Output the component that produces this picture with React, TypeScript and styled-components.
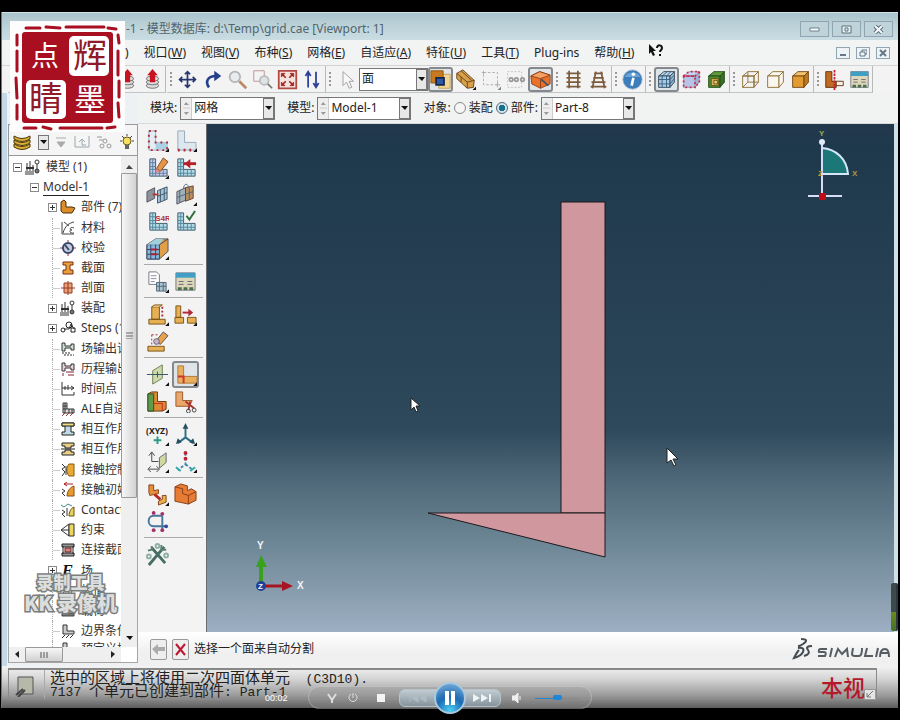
import React from "react";
import styled, { createGlobalStyle, css } from "styled-components";

const GlobalStyle = createGlobalStyle`
  * { box-sizing: border-box; }
  body { margin: 0; background: #000; }
  button, select, input { font: inherit; color: inherit; margin: 0; padding: 0; }
  ul { list-style: none; margin: 0; padding: 0; }
`;

const Screen = styled.div`
  position: relative;
  display: flex;
  flex-direction: column;
  height: 100vh;
  min-height: 600px;
  padding: 12px 2px 12px 1px;
  background: #000;
  color: #222;
  font: 12px/16px "Noto Sans", "Noto Sans CJK SC", sans-serif;
  overflow: hidden;
`;

const AppWindow = styled.div`
  flex: 1;
  min-height: 0;
  display: flex;
  flex-direction: column;
  background: #f1f2f2;
  border-left: 1px solid #5f7f90;
`;

const TitleBar = styled.header`
  display: flex;
  align-items: center;
  justify-content: space-between;
  height: 28px;
  padding: 5px 5px 0 124px;
  background: linear-gradient(#a9c2cb, #bdd3da 50%, #c9dde3);
  color: #52646c;
  border-top: 1px solid #d3e3e8;
`;

const Title = styled.h1`
  margin: 0;
  font-size: 12px;
  font-weight: 400;
  white-space: pre;
`;

const Row = styled.div<{ $gap?: number }>`
  display: flex;
  align-items: center;
  gap: ${(p) => p.$gap ?? 0}px;
`;

const CaptionButton = styled.button<{ $small?: boolean }>`
  display: grid;
  place-items: center;
  width: ${(p) => (p.$small ? 14 : 29)}px;
  height: ${(p) => (p.$small ? 12 : 16)}px;
  border: 1px solid #8fa6b2;
  background: ${(p) => (p.$small ? "#edf3f6" : "#bfd3db")};
`;

const MenuBar = styled.nav`
  display: flex;
  align-items: center;
  justify-content: space-between;
  height: 25px;
  padding: 0 8px 0 123px;
  background: #f2f3f3;
`;

const MenuItem = styled.button`
  border: 0;
  background: none;
  line-height: 16px;
  white-space: nowrap;
`;

const ToolBar = styled.div`
  display: flex;
  height: 28px;
  padding-left: 6px;
  border-top: 1px solid #d2d3d4;
  background: #f3f3f3;
  flex-shrink: 0;
`;

const ToolGroup = styled.div<{ $first?: boolean; $open?: boolean }>`
  display: flex;
  align-items: center;
  justify-content: flex-end;
  width: ${(p) => (p.$first ? "158px" : "auto")};
  margin-right: ${(p) => (p.$first ? 1 : 0)}px;
  border-right: ${(p) => (p.$open ? 0 : 1)}px solid #b9babb;
  border-bottom: 1px solid #c4c5c6;
`;

const Grip = styled.span`
  width: 8px;
  height: 16px;
  background: radial-gradient(circle at 4px 2px, #999 1px, transparent 1px) 0 0 / 8px 4px;
`;

const IconButton = styled.button<{ $on?: boolean; $size?: number }>`
  display: grid;
  place-items: center;
  width: ${(p) => p.$size ?? 25}px;
  height: ${(p) => p.$size ?? 25}px;
  border: ${(p) => (p.$on ? "2px solid #85898d" : "0")};
  border-radius: 3px;
  background: ${(p) => (p.$on ? "#dfe4e8" : "none")};
  svg { display: block; flex: none; margin: -4px; }
`;

const ComboBox = styled.div<{ $width: number }>`
  display: flex;
  align-items: stretch;
  width: ${(p) => p.$width}px;
  height: 23px;
  border: 1px solid #777;
  background: #fff;
`;

const Spinner = styled.span`
  display: grid;
  width: 11px;
  place-items: center;
  background: #eee;
  border-right: 1px solid #ccc;
`;

const Select = styled.select`
  flex: 1;
  min-width: 0;
  appearance: none;
  border: 0;
  background: none;
  padding-left: 2px;
`;

const DropMark = styled.span`
  display: grid;
  place-items: center;
  width: 11px;
  min-height: 15px;
  border: 1px solid #777;
  background: #e8e8e8;
`;

const Body = styled.main`
  flex: 1;
  min-height: 0;
  display: flex;
`;

const SidePanel = styled.aside`
  display: flex;
  flex-direction: column;
  width: 136px;
  flex: none;
  padding: 31px 0 3px 6px;
  background: linear-gradient(90deg, #c4d9e7 0 5px, #eef1f3 5px);
`;

const SideHead = styled.div`
  display: flex;
  align-items: center;
  justify-content: space-between;
  height: 32px;
  padding: 4px 2px 0 4px;
  border: 1px solid #999;
  background: #f5f5f5;
`;

const TreeFrame = styled.div`
  flex: 1;
  min-height: 0;
  display: grid;
  grid-template: minmax(0, 1fr) 15px / minmax(0, 1fr) 16px;
  border: 1px solid #a5a5a5;
  border-top: 0;
  background: #fff;
`;

const Tree = styled.ul`
  display: flex;
  flex-direction: column;
  min-height: 0;
  overflow: hidden;
  padding: 1px 0 0 4px;
`;

const TreeRow = styled.li<{ $level: number; $cut?: boolean }>`
  position: relative;
  flex: ${(p) => (p.$cut ? "0 0 6px" : "1 1 20px")};
  min-height: 0;
  overflow: hidden;
  display: flex;
  align-items: ${(p) => (p.$cut ? "flex-start" : "center")};
  gap: 4px;
  padding-left: ${(p) => [0, 17, 35][p.$level]}px;
  white-space: nowrap;
  svg { flex: none; }
`;

const TreeLabel = styled.span<{ $under?: boolean }>`
  color: #333;
  margin-left: 1px;
  border-bottom: ${(p) => (p.$under ? "1px solid #222" : "0")};
`;

const Twist = styled.button`
  flex: none;
  width: 9px;
  height: 9px;
  margin-right: -1px;
  border: 1px solid #8a8a8a;
  background: #fff;
  svg { display: block; }
`;

const Branch = styled.span`
  flex: none;
  width: 8px;
  height: 20px;
  margin-left: 4px;
  margin-right: -4px;
  border-left: 1px dotted #aaa;
  background: linear-gradient(#ccc, #ccc) 0 10px / 8px 1px no-repeat;
`;

const Scroll = styled.div<{ $across?: boolean }>`
  display: flex;
  flex-direction: ${(p) => (p.$across ? "row" : "column")};
  align-items: stretch;
  background: #efefef;
  ${(p) => !p.$across && css`padding: 4px 0 2px;`}
`;

const ScrollArrow = styled.button`
  display: grid;
  place-items: center;
  border: 0;
  min-width: 16px;
  min-height: 13px;
  background: none;
`;

const Thumb = styled.div<{ $across?: boolean }>`
  display: grid;
  place-items: center;
  flex: ${(p) => (p.$across ? "0 0 38px" : "0 1 325px")};
  border: 1px solid #999;
  border-radius: 1px;
  background: linear-gradient(${(p) => (p.$across ? "180deg" : "90deg")}, #f7f7f7, #d2d2d2);
`;

const Push = styled.div`
  flex: 1;
`;

const Work = styled.div`
  flex: 1;
  min-width: 0;
  display: flex;
  flex-direction: column;
`;

const ContextBar = styled.div`
  display: flex;
  align-items: center;
  height: 31px;
  padding-left: 12px;
  flex: none;
  border-bottom: 1px solid #d5dade;
`;

const Field = styled.label`
  display: flex;
  align-items: center;
  gap: 3px;
  margin-right: 12px;
  white-space: nowrap;
`;

const Choice = styled.label`
  display: flex;
  align-items: center;
  gap: 3px;
  margin-left: 3px;
  white-space: nowrap;
`;

const Radio = styled.input`
  appearance: none;
  width: 12px;
  height: 12px;
  border: 1px solid #888;
  border-radius: 50%;
  background: #f5f5f5;
  &:checked {
    background: radial-gradient(circle, #16708a 0 3px, #d5e6ec 3px);
    border-color: #567;
  }
`;

const Canvas = styled.div`
  flex: 1;
  min-height: 0;
  display: flex;
  border-right: 4px solid #cfe1e8;
`;

const ToolBox = styled.div`
  width: 68px;
  flex: none;
  padding: 0 3px 0 6px;
  background: #f3f3f3;
`;

const ToolBoxGroup = styled.div<{ $last?: boolean }>`
  display: grid;
  grid-template-columns: 28px 28px;
  grid-auto-rows: 27px;
  align-items: center;
  padding: 3px 0 2px;
  border-bottom: ${(p) => (p.$last ? 0 : 1)}px solid #aaa;
`;

const Viewport = styled.section`
  flex: 1;
  min-width: 0;
  border-left: 1px solid #666c70;
  background: linear-gradient(#24384c, #1f394c 4%, #263f52 30%, #2e495c 60%, #4f6879 70%, #718a99 84%, #9dafc2 100%);
  svg { display: block; width: 100%; height: 100%; }
`;

const Prompt = styled.div`
  display: flex;
  align-items: center;
  gap: 5px;
  height: 34px;
  padding: 0 7px 0 12px;
  flex: none;
  background: linear-gradient(#fff, #f0f0f0 60%);
`;

const PromptButton = styled.button`
  display: grid;
  place-items: center;
  width: 17px;
  height: 21px;
  border: 1px solid #999;
  border-radius: 2px;
  background: #eee;
`;

const PromptText = styled.span`
  flex: 1;
`;

const Messages = styled.footer`
  position: relative;
  display: flex;
  height: 42px;
  flex: none;
  padding: 0 21px 0 6px;
  background: linear-gradient(#f4f4f4, #d5d5d5 30%, #9b9b9b 70%, #5c5c5c);
`;

const MessageBox = styled.div`
  flex: 1;
  display: flex;
  margin-top: 2px;
  height: 32px;
  border: 1px solid #8a8a8a;
  border-top: 2px solid #888;
`;

const MessageIcon = styled.div`
  width: 36px;
  padding: 5px 0 0 6px;
  border-right: 1px solid #aaa;
`;

const Log = styled.output`
  padding: 3px 0 0 5px;
  font: 15px/13px "Liberation Mono", "Noto Sans CJK SC", monospace;
  color: #222;
  white-space: pre;
  display: block;
`;

const Mono = styled.span`
  font-size: 13px;
`;

const RedNote = styled.div`
  position: absolute;
  right: 22px;
  bottom: 6px;
  display: flex;
  align-items: flex-end;
  white-space: nowrap;
  color: #b3182b;
  font: 500 22px/26px "Liberation Serif", "Noto Sans CJK SC", serif;
`;

const ResizeButton = styled.button`
  display: grid;
  place-items: center;
  width: 12px;
  height: 11px;
  margin: 0 0 2px -1px;
  border: 1px solid #999;
  background: #e5e5e5;
`;

const Player = styled.div`
  position: absolute;
  left: 308px;
  right: 308px;
  bottom: 11px;
  height: 23px;
  display: flex;
  align-items: center;
  padding-left: 12px;
  border-radius: 12px;
  border: 1px solid rgba(255, 255, 255, 0.22);
  background: rgba(150, 150, 150, 0.35);
`;

const PlayButton = styled.button<{ $wide?: boolean }>`
  display: grid;
  place-items: center;
  flex: none;
  width: ${(p) => (p.$wide ? 36 : 21)}px;
  height: 18px;
  border: 0;
  background: none;
`;

const Transport = styled.div`
  display: flex;
  align-items: center;
  width: 102px;
  height: 18px;
  margin: 0 5px 0 0;
  border-radius: 6px;
  border: 1px solid #b7c3cb;
  background: linear-gradient(#c2ccd2, #87949c);
`;

const Pause = styled.button`
  flex: none;
  display: grid;
  place-items: center;
  width: 32px;
  height: 32px;
  margin: 0 -2px;
  border-radius: 50%;
  border: 2px solid #a9c8df;
  background: radial-gradient(circle at 50% 95%, #4fd0f5, #1b6cb5 45%, #2b74b8 55%, #86b9e0);
  z-index: 1;
`;

const Volume = styled.input`
  appearance: none;
  width: 44px;
  height: 8px;
  margin-left: 8px;
  background: linear-gradient(90deg, #2a83c9 50%, #888 50%) 0 4px / 100% 1px no-repeat;
  &::-webkit-slider-thumb {
    appearance: none;
    width: 9px;
    height: 5px;
    border-radius: 2px;
    background: #1f86d6;
  }
`;

const Time = styled.time`
  position: absolute;
  left: 265px;
  bottom: 16px;
  color: #fff;
  font: 9px/12px "Liberation Sans", sans-serif;
`;

const Seal = styled.div`
  position: absolute;
  left: 10px;
  top: 21px;
  width: 115px;
  height: 111px;
  background: #fdfdfd;
  svg { display: block; }
`;

const Watermark = styled.div`
  position: absolute;
  left: 23px;
  bottom: 106px;
  width: 95px;
  text-align: center;
  color: #dcdedd;
  font: 900 17px/21px "Noto Sans CJK SC", sans-serif;
  -webkit-text-stroke: 3px #7b807e;
  paint-order: stroke fill;
  white-space: nowrap;
`;

const WatermarkName = styled.span`
  font-size: 20px;
`;

const Gadget = styled.div`
  position: absolute;
  right: 2px;
  bottom: 89px;
  width: 7px;
  height: 48px;
  border-radius: 2px;
  border-right: 2px solid #2c3a3d;
  background: linear-gradient(#3d4a4d 60%, #6d8a1c 60%, #46702a);
`;

/* ---------- icon drawings on a 24px grid ---------- */

const L = "M4 3h6v11h12v7H4z";
const grid = "M4 7h6M4 11h6M4 14h6M4 18h18M7 3v18M10 14v7M14 14v7M18 14v7";
const Corner = () => <path d="M24 20v4h-4z" fill="#111" />;
const Mesh = ({ fill = "#b4dce6" }: { fill?: string }) => (
  <>
    <path d={L} fill={fill} stroke="#3f5a68" />
    <path d={grid} stroke="#5587a0" fill="none" />
  </>
);
const Cube = ({ top, front, side, line = "#444" }: { top: string; front: string; side: string; line?: string }) => (
  <g stroke={line} strokeLinejoin="round">
    <path d="M3 8l6-5h12l-5 5z" fill={top} />
    <path d="M3 8h13v13H3z" fill={front} />
    <path d="M16 8l5-5v12l-5 6z" fill={side} />
  </g>
);

const icons: Record<string, React.ReactNode> = {
  db: (
    <>
      <g fill="#ddd" stroke="#666"><ellipse cx="12" cy="19" rx="7" ry="3" /><ellipse cx="12" cy="15" rx="7" ry="3" /><ellipse cx="12" cy="11" rx="7" ry="3" /></g>
      <path d="M12 0l6 7h-3v8H9V7H6z" fill="#c8141e" />
    </>
  ),
  move: <path d="M12 3v18M3 12h18M9 6l3-3 3 3M9 18l3 3 3-3M6 9l-3 3 3 3M18 9l3 3-3 3" fill="none" stroke="#26366e" strokeWidth="2" />,
  rotate: <><path d="M8 21C3 14 7 8 16 8" fill="none" stroke="#263f8c" strokeWidth="3" /><path d="M14 2l8 6-8 6z" fill="#263f8c" /></>,
  zoom: <><circle cx="9" cy="9" r="6" fill="#e8ecef" stroke="#b2b4b6" strokeWidth="2" /><path d="M14 14l8 8" stroke="#b98b63" strokeWidth="3" /></>,
  zoombox: <><path d="M2 2h12v12H2z" fill="none" stroke="#b98c8c" /><circle cx="14" cy="13" r="5" fill="#dfe3e6" stroke="#b9bbbd" strokeWidth="2" /><path d="M18 17l5 5" stroke="#777" strokeWidth="2" /></>,
  fit: <><path d="M2 2h20v20H2z" fill="#f6e2dd" stroke="#b04a42" strokeWidth="2" /><path d="M5 9V5h4zM19 9V5h-4zM5 15v4h4zM19 15v4h-4z" fill="#a42822" stroke="#a42822" /><path d="M6 6l4 4M18 6l-4 4M6 18l4-4M18 18l-4-4" stroke="#a42822" strokeWidth="2" /></>,
  cycle: <path d="M7 21V4M4 8l3-5 3 5M16 3v17M13 16l3 5 3-5" fill="none" stroke="#2c3f9b" strokeWidth="2" />,
  arrow: <path d="M8 3v16l4-4 3 7 3-1-3-7h5z" fill="#f8f8f8" stroke="#999" />,
  overlap: <><path d="M10 6h13v16H10z" fill="#f0d595" stroke="#c69b46" /><path d="M1 2h14v14H1z" fill="#c77a1f" stroke="#8c5514" /><path d="M7 10h9v8H7z" fill="#2c59a8" stroke="#16264c" strokeWidth="2" /></>,
  block: <><path d="M2 5l7-4 13 12-1 8-7 1L2 11z" fill="#d9a04c" stroke="#5f3b10" /><path d="M2 5l12 10 8-2M14 15v7M7 2l12 11M7 9v6" fill="none" stroke="#5f3b10" /><Corner /></>,
  dashed: <><path d="M4 4h16v14H4z" fill="none" stroke="#aaa" strokeDasharray="3 2" /><path d="M2 4h4M4 2v4M18 18h5M20 16v5" stroke="#aaa" /><path d="M24 20v4h-4z" fill="#888" /></>,
  gears: <><path d="M3 3h16v18H3z" fill="none" stroke="#bbb" strokeDasharray="2 2" /><g fill="none" stroke="#999" strokeWidth="2"><circle cx="7" cy="12" r="2" /><circle cx="13" cy="12" r="2" /><circle cx="20" cy="12" r="2" /></g></>,
  orange: <g stroke="#8e3c12"><path d="M1 8l10-5 12 4v10l-11 5-10-5z" fill="#e8722c" /><path d="M1 8l11 3 11-4L11 3z" fill="#f6a163" /><path d="M12 11v11" /><path d="M13 12l8 7" stroke="#3c5a6b" strokeWidth="2" /></g>,
  rail: <path d="M7 2v20M17 2v20M4 5h16M4 10h16M4 15h16M4 20h16" stroke="#7d5c3e" strokeWidth="2" />,
  rail2: <path d="M9 3L5 22M15 3l4 19M7 5h10M6 10h12M4 15h16M3 20h18" stroke="#7d5c3e" strokeWidth="2" />,
  info: <><circle cx="12" cy="12" r="11" fill="#3c7dbb" stroke="#9fb6ca" /><path d="M3 9a10 9 0 0 1 18 0z" fill="#6da3d2" /><circle cx="13" cy="6" r="2" fill="#fff" /><path d="M13 10l-2 9" stroke="#fff" strokeWidth="3" /></>,
  meshcube: <><Cube top="#bcd6ec" front="#a8cae6" side="#8fb4d3" line="#345" /><path d="M3 12h13l5-5M3 17h13l5-6M7 8v13M12 8v13M7 8l6-5M12 8l5-5" fill="none" stroke="#345b7c" /></>,
  ptscube: <><Cube top="#c7d2ee" front="#b5c4e6" side="#9fb1d8" line="#99a" /><path d="M3 8l6-5h12l-5 5zM3 8h13v13H3zM21 3v12l-5 6" fill="none" stroke="#c02a50" strokeWidth="2" strokeDasharray="2 3" /></>,
  greencube: <><Cube top="#5f9a3c" front="#4b8a30" side="#3a6f25" line="#244a18" /><path d="M6 11h8v8H6z" fill="#d8b45c" stroke="#6b4a12" /><path d="M9 13h4v4H9z" fill="#ecd08a" stroke="#6b4a12" /></>,
  wire: <><Cube top="none" front="none" side="none" line="#8a6a2e" /><path d="M9 3v12h12M9 15l-6 6" fill="none" stroke="#8a6a2e" /></>,
  hidden: <Cube top="#faf7ee" front="#faf7ee" side="#faf7ee" line="#8a6a2e" />,
  solid: <Cube top="#f3c46c" front="#e39b33" side="#bf7a20" line="#6d4410" />,
  cutL: <><path d="M2 3h7v11h5v7H2z" fill="#c06a22" stroke="#5c2d0c" /><path d="M14 14h8v5h-8z" fill="#fbf0e6" stroke="#5c2d0c" /><path d="M12 1v23" stroke="#c81e2e" strokeWidth="2" strokeDasharray="3 1" /></>,
  table: <><path d="M2 3h20v18H2z" fill="#ddd6b8" stroke="#778" /><path d="M2 3h20v5H2z" fill="#3f9fc4" /><path d="M5 12h5M14 12h5M5 15h5M14 15h5" stroke="#667" /><path d="M4 18h4v3H4zM10 18h4v3h-4zM16 18h4v3h-4z" fill="#49704a" /></>,
  seedPart: <><path d="M3 2h7v12h12v8H3z" fill="#e4edf3" stroke="#9ab" /><path d="M10 14h12v7H10z" fill="#a9d2e4" /><path d="M3 2h7v12h12v8H3z" fill="none" stroke="#b02a38" strokeWidth="2" strokeDasharray="2 4" /><Corner /></>,
  seedEdge: <><path d="M4 2h7v12h12v8H4z" fill="#dce7ee" stroke="#9ab" /><path d="M4 22h18" stroke="#b02a38" strokeWidth="3" strokeDasharray="2 4" /><Corner /></>,
  eraseMesh: <><Mesh fill="#c9c6ec" /><path d="M11 13l7-11 5 4-8 10z" fill="#e5954a" stroke="#7c4a20" /><path d="M11 13l4 3-5 2z" fill="#d88" /><Corner /></>,
  stack: <><Mesh /><path d="M10 8h13" stroke="#b5202c" strokeWidth="3" /><path d="M17 3v10l-6-5z" fill="#b5202c" /></>,
  assoc: <><path d="M1 9l8-4v11l-8 4z" fill="#8b9299" stroke="#556" /><path d="M12 8l10-4v13l-10 4z" fill="#9fc6dc" stroke="#456" /><path d="M15 7v13M19 5v13M12 14l10-4" stroke="#456" /><path d="M7 12h6" stroke="#b33" strokeWidth="2" /></>,
  clip: <><path d="M3 9l9-4v13l-9 4z" fill="#9fb0b8" stroke="#556" /><path d="M12 5l8-2v13l-8 3z" fill="#b98c5c" stroke="#643" /><path d="M10 6c0-6 5-6 5-1M6 8v12M16 5v12M3 15l17-6" fill="none" stroke="#567" /><Corner /></>,
  elemType: <><Mesh /><text x="10" y="11" fontSize="8" fontFamily="Liberation Sans" fontWeight="700" fill="#b0303c">S4R</text></>,
  verify: <><Mesh /><path d="M13 6l3 4 6-9" fill="none" stroke="#2c6b3a" strokeWidth="2" /></>,
  meshBlock: <><path d="M1 8l9-6h13v13l-9 8H1z" fill="#e0a04a" stroke="#555" /><path d="M1 8h13v15H1z" fill="#86b9dc" stroke="#346" /><path d="M1 8l9-6h8l-4 6z" fill="#9fd0e0" /><path d="M1 13h13M1 18h13M5 8v15M10 8v15M14 8l9-6" stroke="#346" fill="none" /><path d="M5 13h7M5 18h7" stroke="#a23" strokeWidth="2" /><Corner /></>,
  copyMesh: <><path d="M3 2h8l3 3v10H3z" fill="#fff" stroke="#778" /><path d="M5 6h6M5 9h6M5 12h4" stroke="#889" /><path d="M11 13h10v9H11z" fill="#a9c3d2" stroke="#567" /><path d="M14 13v9M18 13v9M11 17h10" stroke="#567" /><Corner /></>,
  virt1: <><path d="M3 17h17v5H3zM6 4h8v13H6z" fill="#e6b054" stroke="#7d5418" /><path d="M6 4l3-2h8l-3 2" fill="#f4d087" stroke="#7d5418" /><path d="M17 4v12" stroke="#b02a38" strokeWidth="2" strokeDasharray="2 2" /><Corner /></>,
  virt2: <><path d="M2 3h5v12H2zM1 15h9v6H1zM14 15h9v6h-9z" fill="#e6b054" stroke="#7d5418" /><path d="M9 10h8" stroke="#b02a38" strokeWidth="2" fill="none" /><path d="M15 6l5 4-5 4z" fill="#b02a38" /><Corner /></>,
  virt3: <><path d="M2 17h17v5H2z" fill="#e6b054" stroke="#7d5418" /><path d="M10 12l8-10 5 4-8 9z" fill="#e9a24c" stroke="#555" /><path d="M6 5v11M6 5h8" stroke="#b02a38" strokeDasharray="2 2" /><circle cx="11" cy="12" r="3" fill="#c9b0c9" stroke="#667" /></>,
  datum: <><path d="M7 8l10-6v14L7 22z" fill="#cdd9ae" stroke="#6f7d50" /><path d="M1 12h22M12 9v6" stroke="#356" /><Corner /></>,
  partFace: <><path d="M4 3h6v11h14v7H4z" fill="#e9b060" stroke="#b07a34" /><path d="M4 14h6v7" fill="none" stroke="#c33" strokeWidth="2" /><Corner /></>,
  partCell: <><path d="M2 4l4-2h6v10h9v8l-4 2H2z" fill="#dc8a33" stroke="#6b3d12" /><path d="M2 4h6v18H2z" fill="#5f9a48" stroke="#2e5522" /><path d="M8 14h9v8" fill="none" stroke="#c22" /><Corner /></>,
  partCut: <><path d="M2 2h7v9h10l-3 6H2z" fill="#eba66c" stroke="#9a5a2a" /><path d="M12 12l9 7M17 12l-2 9" stroke="#a33" strokeWidth="2" /><g fill="none" stroke="#444"><circle cx="15" cy="22" r="2" /><circle cx="21" cy="21" r="2" /></g></>,
  xyz: <><text x="0" y="11" fontSize="9" fontFamily="Noto Sans" fontWeight="700" fill="#222">(XYZ)</text><path d="M12 14v8M8 18h8" stroke="#2a9a8a" strokeWidth="2" /><Corner /></>,
  axes: <><path d="M12 15V3M12 15l-8 6M12 15l8 6" stroke="#2a6f86" strokeWidth="2" /><path d="M12 0l3 6H9zM2 22l2-6 4 4zM22 22l-6-2 4-4z" fill="#264f60" /><Corner /></>,
  csys: <><path d="M6 12V3M6 12h7M3 6l3-4 3 4M3 20h10M5 17l-3 3 3 3M11 17l3 3-3 3" stroke="#444" fill="none" /><path d="M14 8l7-5v10l-7 6z" fill="#cfd8a0" stroke="#667" /><Corner /></>,
  pts: <><path d="M12 3v12l-8 6M12 15l8 6" fill="none" stroke="#48a" strokeWidth="2" strokeDasharray="3 2" /><g fill="#b23"><circle cx="12" cy="3" r="2" /><circle cx="12" cy="9" r="2" /></g><path d="M2 18l5 4M22 18l-5 4" stroke="#3aa" strokeWidth="2" /><Corner /></>,
  twist: <><path d="M3 2h5v6l5-1v4l-9 2-1-3z" fill="#e58f3c" stroke="#84461a" /><path d="M9 12l6 5" stroke="#b22" strokeWidth="3" /><path d="M17 13h4v7l-8 3v-4l4-2z" fill="#e9b04c" stroke="#84461a" /><Corner /></>,
  bigPart: <><path d="M1 4l6-3 7 2v5l4-2 5 3v9l-8 4-14-3z" fill="#e77d34" stroke="#8b3d14" /><path d="M1 4l8 2v5l6 2v9M15 13l8-4" fill="none" stroke="#8b3d14" /></>,
  handle: <><path d="M17 6H8c-7 0-7 11 0 11h12M17 6v14" fill="none" stroke="#47779a" strokeWidth="2" /><g fill="#a2336a"><circle cx="8" cy="3" r="2" /><circle cx="17" cy="4" r="2" /><circle cx="8" cy="21" r="2" /><circle cx="17" cy="21" r="2" /></g><circle cx="21" cy="17" r="2" fill="#3447a0" /></>,
  tools: <><path d="M3 23L19 4M6 5l14 16" stroke="#456f65" strokeWidth="3" /><path d="M2 8l4-1V3M16 2v5h5" fill="none" stroke="#5d7f76" strokeWidth="2" /><g fill="none" stroke="#8fb0a4" strokeWidth="2"><circle cx="3" cy="14" r="2" /><circle cx="21" cy="13" r="2" /><circle cx="12" cy="3" r="2" /></g></>,
};

const treeIcons: Record<string, React.ReactNode> = {
  model: <><path d="M2 4v8M5 2v10M8 6v6M0 13h9M0 15h9M12 5v5" stroke="#333" strokeWidth="1" /><path d="M1 9h8" stroke="#333" strokeWidth="2" /><circle cx="12" cy="3" r="2" fill="none" stroke="#333" /><circle cx="12" cy="12" r="2" fill="#777" stroke="#333" /></>,
  part: <path d="M1 3l3-2 2 2v5h6l3 1-3 5H3l-2-2z" fill="#d98d2b" stroke="#4e2e0a" />,
  material: <><path d="M2 2v12h12M3 13C5 6 9 3 14 2M4 2l5 4" fill="none" stroke="#444" /><path d="M14 8c-4-2-5 2-2 2-4 0-2 4 2 3" fill="none" stroke="#444" /></>,
  gauge: <><circle cx="8" cy="8" r="5" fill="#ccd" stroke="#33486b" strokeWidth="2" /><path d="M9 10L5 5" stroke="#33486b" strokeWidth="2" /><path d="M8 0v2M8 14v2M0 8h2M14 8h2" stroke="#933" /></>,
  section: <path d="M3 2h10v3h-3v5h3v4H3v-4h3V5H3z" fill="#e8a13a" stroke="#7a2a14" />,
  profile: <><path d="M4 3h8v10H4z" fill="#e3a27a" stroke="#9a3b22" /><path d="M8 1v14M1 8h14" stroke="#9a3b22" /></>,
  steps: <><path d="M4 9h5M9 9l2-5M11 4l3 5" stroke="#333" /><circle cx="3" cy="10" r="2" fill="none" stroke="#222" /><circle cx="9" cy="5" r="3" fill="none" stroke="#222" /><path d="M11 8h4v4h-4z" fill="none" stroke="#222" /></>,
  field: <><path d="M2 2h3v3h6V3h3v6h-3V7H5v3H2z" fill="#cde0d4" stroke="#333" /><path d="M2 12h8M4 14h10" stroke="#333" strokeDasharray="2 1" /></>,
  history: <><path d="M2 2h3v3h6V3h3v6h-3V7H5v3H2z" fill="#ecd2dc" stroke="#333" /><path d="M6 11h8M8 14h6M3 12v3" stroke="#823" /></>,
  time: <path d="M2 1v13h12M2 7h12M8 4v5M11 5l3 2-3 2M5 5v4M14 11v3" fill="none" stroke="#333" />,
  ale: <><path d="M3 2h4v6h7v4H3zM3 5h4M3 8h4M5 2v10M9 8v4M12 8v4" fill="#ddd" stroke="#333" /><path d="M2 15l3-3M6 15l3-3M10 15l3-3" stroke="#844" /></>,
  inter: <><path d="M2 2h12v3h-3v6h3v3H2v-3h3V5H2z" fill="#bfd9e6" stroke="#222" /><path d="M2 2h12v3H2z" fill="#f1dc82" stroke="#222" /></>,
  interprop: <><path d="M2 2h12v3h-3v2H5V5H2zM5 9h6v2h3v3H2v-3h3z" fill="#e9cf85" stroke="#222" /><path d="M1 8h14" stroke="#222" /></>,
  contact: <><path d="M9 2h5v12H9c-3-4-3-8 0-12z" fill="#e8aa35" stroke="#8a5a12" /><path d="M2 2l3 3-3 2 3 3-3 4M6 4v9" fill="none" stroke="#333" /></>,
  contactinit: <><path d="M14 4v10H7c0-4 3-9 7-10z" fill="#e99b30" stroke="#8a4a12" /><path d="M2 7l3 2-3 2 3 3" fill="none" stroke="#333" /><path d="M4 2h9M7 0L4 2l3 2" fill="none" stroke="#a22" /></>,
  stab: <><path d="M14 5v9H9c0-4 2-8 5-9z" fill="#e9d060" stroke="#665512" /><path d="M1 3l3 2 4-3 4 2" fill="none" stroke="#488" /><path d="M2 8l3 2-3 2 3 3M7 6v8" fill="none" stroke="#333" /></>,
  constraint: <><path d="M1 8l8-6v12zM1 8h8" fill="none" stroke="#333" /><path d="M9 2h5v12H9z" fill="#ecd65c" stroke="#333" /></>,
  connector: <><path d="M2 2h12v3H2zM2 11h12v3H2zM3 4v8M13 4v8" fill="#999" stroke="#222" /><path d="M5 6h6v4H5z" fill="#d98484" stroke="#622" /></>,
  f: <text x="2" y="13" fontSize="16" fontFamily="Liberation Serif" fontStyle="italic" fontWeight="700" fill="#111">F</text>,
  amp: <path d="M2 13L6 4l4 8 4-8" fill="none" stroke="#444" />,
  load: <path d="M2 10h12v3H2zM4 3v6M8 3v6M12 3v6" fill="#777" stroke="#444" />,
  bc: <><path d="M3 2h4v6h7v3H3z" fill="#ccc" stroke="#333" /><path d="M2 15l3-3M6 15l3-3M10 15l3-3" stroke="#333" /></>,
};

const Icon = ({ name, size = 24 }: { name: string; size?: number }) => (
  <svg width={size} height={size} viewBox="0 0 24 24" aria-hidden="true">{icons[name]}</svg>
);

const Tool = ({ name, on, label }: { name: string; on?: boolean; label?: string }) => (
  <IconButton $on={on} aria-label={label ?? name}><Icon name={name} size={21} /></IconButton>
);

const Down = () => <svg width="7" height="5" viewBox="0 0 7 5" aria-hidden="true"><path d="M0 0h7L4 4z" fill="#111" /></svg>;

const Combo = ({ id, value, width, spin = true }: { id: string; value: string; width: number; spin?: boolean }) => (
  <ComboBox $width={width}>
    {spin && (
      <Spinner>
        <svg width="7" height="17" viewBox="0 0 7 17" aria-hidden="true"><path d="M1 5l2-3 3 3zM1 12h5l-3 3z" fill="#999" /><path d="M0 8h7" stroke="#ccc" /></svg>
      </Spinner>
    )}
    <Select id={id} aria-label={id} defaultValue={value}><option>{value}</option></Select>
    <DropMark><Down /></DropMark>
  </ComboBox>
);

const menus: [string, string][] = [
  ["视口", "W"], ["视图", "V"], ["布种", "S"], ["网格", "E"], ["自适应", "A"],
  ["特征", "U"], ["工具", "T"], ["Plug-ins", ""], ["帮助", "H"],
];

const treeRows: [string, string, boolean?][] = [
  ["part", "部件 (7)", true], ["material", "材料"], ["gauge", "校验"], ["section", "截面"], ["profile", "剖面"],
  ["model", "装配", true], ["steps", "Steps (1)", true], ["field", "场输出请求"], ["history", "历程输出请求"], ["time", "时间点"],
  ["ale", "ALE自适应"], ["inter", "相互作用"], ["interprop", "相互作用属性"], ["contact", "接触控制"], ["contactinit", "接触初始化"],
  ["stab", "Contact"], ["constraint", "约束"], ["connector", "连接截面"], ["f", "场", true], ["amp", "幅值"],
  ["load", "载荷"], ["bc", "边界条件"],
];

const toolbox: string[][] = [
  ["seedPart", "seedEdge", "eraseMesh", "stack", "assoc", "clip", "elemType", "verify", "meshBlock"],
  ["copyMesh", "table"],
  ["virt1", "virt2", "virt3"],
  ["datum", "partFace", "partCell", "partCut"],
  ["xyz", "axes", "csys", "pts"],
  ["twist", "bigPart", "handle"],
  ["tools"],
];

const TreeIcon = ({ name }: { name: string }) => (
  <svg width="16" height="16" viewBox="0 0 16 16" aria-hidden="true">{treeIcons[name]}</svg>
);

const Twisty = ({ open }: { open?: boolean }) => (
  <Twist aria-label={open ? "collapse" : "expand"}>
    <svg width="7" height="7" viewBox="0 0 7 7"><path d={open ? "M1 3h5v1H1z" : "M1 3h5v1H1zM3 1h1v5H3z"} fill="#333" /></svg>
  </Twist>
);

const Sidebar = () => (
  <SidePanel>
    <SideHead>
      <svg width="18" height="16" viewBox="0 0 18 16" aria-hidden="true"><path d="M1 2q8 5 16 0v3q-8 5-16 0zM1 6q8 5 16 0v3q-8 5-16 0zM1 10q8 5 16 0v3q-8 5-16 0z" fill="#dcae35" stroke="#4c3808" /></svg>
      <DropMark><Down /></DropMark>
      <svg width="12" height="12" viewBox="0 0 12 12" aria-hidden="true"><path d="M1 2h10M2 6h8l-4 5z" fill="#aaa" stroke="#aaa" /></svg>
      <svg width="16" height="14" viewBox="0 0 16 14" aria-hidden="true"><path d="M1 1v11h14V1M8 10V4M8 4L5 7M8 4l3 3M8 10h4" fill="none" stroke="#9aa8ae" /></svg>
      <svg width="16" height="14" viewBox="0 0 16 14" aria-hidden="true"><path d="M1 2h5M3 5h4" stroke="#999" /><g fill="none" stroke="#999"><circle cx="9" cy="6" r="2" /><circle cx="6" cy="11" r="2" /><circle cx="13" cy="11" r="2" /></g></svg>
      <svg width="16" height="16" viewBox="0 0 16 16" aria-hidden="true"><circle cx="8" cy="7" r="4" fill="#f6df62" stroke="#6b5a18" /><path d="M6 11h4v4H6z" fill="#666" /><path d="M8 0v2M1 7h2M13 7h2M3 2l2 2M13 2l-2 2" stroke="#444" /></svg>
    </SideHead>
    <TreeFrame>
      <Tree>
        <TreeRow $level={0}><Twisty open /><TreeIcon name="model" /><TreeLabel>模型 (1)</TreeLabel></TreeRow>
        <TreeRow $level={1}><Twisty open /><TreeLabel $under>Model-1</TreeLabel></TreeRow>
        {treeRows.map(([icon, label, more]) => (
          <TreeRow key={label} $level={2}>
            {more ? <Twisty /> : <Branch />}
            <TreeIcon name={icon} />
            <TreeLabel>{label}</TreeLabel>
          </TreeRow>
        ))}
        <TreeRow $level={2} $cut><Branch /><TreeIcon name="bc" /><TreeLabel>预定义场</TreeLabel></TreeRow>
      </Tree>
      <Scroll>
        <ScrollArrow aria-label="scroll up"><svg width="7" height="4" viewBox="0 0 7 4"><path d="M0 4l3-4 4 4z" fill="#444" /></svg></ScrollArrow>
        <Thumb><svg width="7" height="7" viewBox="0 0 7 7"><path d="M0 1h7M0 4h7M0 7h7" stroke="#666" /></svg></Thumb>
        <Push />
        <ScrollArrow aria-label="scroll down"><Down /></ScrollArrow>
      </Scroll>
      <Scroll $across>
        <ScrollArrow aria-label="scroll left"><svg width="4" height="7" viewBox="0 0 4 7"><path d="M4 0v7L0 3z" fill="#222" /></svg></ScrollArrow>
        <Thumb $across><svg width="8" height="6" viewBox="0 0 8 6"><path d="M1 0v6M4 0v6M7 0v6" stroke="#555" /></svg></Thumb>
        <Push />
        <ScrollArrow aria-label="scroll right"><svg width="4" height="7" viewBox="0 0 4 7"><path d="M0 0v7l4-4z" fill="#222" /></svg></ScrollArrow>
      </Scroll>
    </TreeFrame>
  </SidePanel>
);

const Scene = () => (
  <svg viewBox="1 0 687 508" aria-label="viewport">
    <g fill="#d0979f" stroke="#1a1a1a">
      <path d="M355 78h44v311h-44z" />
      <path d="M222 389h177v44z" />
    </g>
    <g fill="#fff" stroke="#222">
      <path d="M205 274v12l3-3 2 5 2-1-2-5h4z" />
      <path d="M461 324v15l4-3 3 6 2-1-3-6h5z" />
    </g>
    <path d="M616 24c14 1 25 11 26 26h-26z" fill="#1c7778" stroke="#d6e6f6" strokeWidth="2" />
    <path d="M616 18v53M602 72h34" stroke="#d8dcf6" strokeWidth="2" />
    <circle cx="616" cy="18" r="3" fill="#dfe9fa" />
    <path d="M613 69h7v7h-7z" fill="#c00d18" />
    <g fontFamily="Liberation Sans" fontSize="8" fontWeight="700">
      <text x="613" y="12" fill="#8fae52">Y</text>
      <text x="646" y="52" fill="#ad9638">X</text>
      <text x="612" y="52" fill="#d09a28">Z</text>
    </g>
    <path d="M55 460v-20" stroke="#39a020" strokeWidth="4" />
    <path d="M50 443l5-12 6 12z" fill="#39a020" />
    <path d="M58 462h18" stroke="#a81522" strokeWidth="3" />
    <path d="M76 457l11 5-11 5z" fill="#a81522" />
    <circle cx="55" cy="462" r="5" fill="#233f96" />
    <g fontFamily="Liberation Sans" fontSize="10" fontWeight="700" fill="#f2f5f8">
      <text x="51" y="425">Y</text>
      <text x="91" y="465">X</text>
      <text x="52" y="465" fontSize="8">Z</text>
    </g>
  </svg>
);

const SealMark = () => (
  <Seal>
    <svg width="115" height="111" viewBox="0 0 115 111">
      <g stroke="#a80f20" strokeWidth="3" fill="none" strokeLinecap="round">
        <path d="M16 7h14M36 6l14 1M56 6h38M98 7l8 1" />
        <path d="M7 14v10M7 30v20M6 57l1 20M7 84v14" />
        <path d="M108 14l1 8M108 30v24M109 60v16M108 82l1 14" />
        <path d="M14 107h12M33 106l8 2M50 107h42M97 107l8-1" />
      </g>
      <rect x="12" y="11" width="91" height="91" rx="3" fill="#a80f20" />
      <rect x="59" y="15" width="40" height="40" rx="5" fill="#fff" />
      <rect x="16" y="59" width="40" height="39" rx="5" fill="#fff" />
      <g fontFamily="Noto Sans CJK SC" textAnchor="middle">
        <text x="35" y="45" fontSize="28" fill="#fff">点</text>
        <text x="80" y="47" fontSize="34" fill="#8f1a28">辉</text>
        <text x="36" y="90" fontSize="34" fill="#8f1a28">睛</text>
        <text x="80" y="90" fontSize="32" fill="#fff">墨</text>
      </g>
    </svg>
  </Seal>
);

export default function App() {
  return (
    <Screen>
      <GlobalStyle />
      <AppWindow>
        <TitleBar>
          <Title>-1 - 模型数据库: d:\Temp\grid.cae [Viewport: 1]</Title>
          <Row $gap={3}>
            <CaptionButton aria-label="minimize"><svg width="11" height="5" viewBox="0 0 11 5"><path d="M1 1h9v3H1z" fill="#fff" stroke="#6b7f8a" /></svg></CaptionButton>
            <CaptionButton aria-label="maximize"><svg width="11" height="9" viewBox="0 0 11 9"><path d="M1 1h9v7H1zM4 3h3v3H4z" fill="#e8f0f4" stroke="#5c707b" /></svg></CaptionButton>
            <CaptionButton aria-label="close"><svg width="11" height="9" viewBox="0 0 11 9"><path d="M2 1l7 7M9 1L2 8" stroke="#5c707b" strokeWidth="4" /><path d="M2 1l7 7M9 1L2 8" stroke="#f4f8fa" strokeWidth="2" /></svg></CaptionButton>
          </Row>
        </TitleBar>
        <MenuBar>
          <Row $gap={15}>
            <MenuItem>)</MenuItem>
            {menus.map(([name, key]) => (
              <MenuItem key={name}>{name}{key && <>(<u>{key}</u>)</>}</MenuItem>
            ))}
            <MenuItem aria-label="context help">
              <svg width="14" height="14" viewBox="0 0 14 14"><path d="M0 0v10l2-2 2 4 2-1-2-4h3z" fill="#111" /><path d="M8 4c0-4 5-3 5 0 0 2-2 2-2 4M11 10v2" fill="none" stroke="#111" strokeWidth="2" /></svg>
            </MenuItem>
          </Row>
          <Row $gap={6}>
            <CaptionButton $small aria-label="minimize viewport"><svg width="8" height="8" viewBox="0 0 8 8"><path d="M1 6h6" stroke="#678" strokeWidth="2" /></svg></CaptionButton>
            <CaptionButton $small aria-label="restore viewport"><svg width="8" height="8" viewBox="0 0 8 8"><path d="M3 3V1h5v4H6M1 3h5v4H1z" fill="none" stroke="#678" /></svg></CaptionButton>
            <CaptionButton $small aria-label="close viewport"><svg width="8" height="8" viewBox="0 0 8 8"><path d="M1 1l6 6M7 1L1 7" stroke="#678" strokeWidth="2" /></svg></CaptionButton>
          </Row>
        </MenuBar>
        <ToolBar>
          <ToolGroup $first><Tool name="db" /><Tool name="db" /></ToolGroup>
          <ToolGroup><Grip />{["move", "rotate", "zoom", "zoombox", "fit", "cycle"].map((n) => <Tool key={n} name={n} />)}</ToolGroup>
          <ToolGroup $open>
            <Grip /><Tool name="arrow" />
            <Combo id="filter" value="面" width={69} spin={false} />
            <Tool name="overlap" on /><Tool name="block" /><Tool name="dashed" /><Tool name="gears" /><Tool name="orange" on />
          </ToolGroup>
          <ToolGroup><Grip /><Tool name="rail" /><Tool name="rail2" /></ToolGroup>
          <ToolGroup><Grip /><Tool name="info" /></ToolGroup>
          <ToolGroup><Grip /><Tool name="meshcube" on /><Tool name="ptscube" /><Tool name="greencube" /></ToolGroup>
          <ToolGroup><Grip /><Tool name="wire" /><Tool name="hidden" /><Tool name="solid" /></ToolGroup>
          <ToolGroup><Grip /><Tool name="cutL" /><Tool name="table" /></ToolGroup>
        </ToolBar>
        <Body>
          <Sidebar />
          <Work>
            <ContextBar>
              <Field>模块: <Combo id="module" value="网格" width={95} /></Field>
              <Field>模型: <Combo id="model" value="Model-1" width={94} /></Field>
              <span>对象:</span>
              <Choice><Radio type="radio" name="target" />装配</Choice>
              <Choice><Radio type="radio" name="target" defaultChecked />部件:</Choice>
              <Choice><Combo id="part" value="Part-8" width={94} /></Choice>
            </ContextBar>
            <Canvas>
              <ToolBox>
                {toolbox.map((group, i) => (
                  <ToolBoxGroup key={i} $last={i === toolbox.length - 1}>
                    {group.map((n) => (
                      <IconButton key={n} $size={27} $on={n === "partFace"} aria-label={n}><Icon name={n} size={23} /></IconButton>
                    ))}
                  </ToolBoxGroup>
                ))}
              </ToolBox>
              <Viewport><Scene /></Viewport>
            </Canvas>
            <Prompt>
              <PromptButton aria-label="back"><svg width="13" height="11" viewBox="0 0 13 11"><path d="M0 5l6-5v3h7v4H6v4z" fill="#aaa" /></svg></PromptButton>
              <PromptButton aria-label="cancel"><svg width="11" height="13" viewBox="0 0 11 13"><path d="M1 1l9 11M10 1L1 12" stroke="#bd1730" strokeWidth="2" /></svg></PromptButton>
              <PromptText>选择一个面来自动分割</PromptText>
              <svg width="100" height="22" viewBox="0 0 100 22" role="img" aria-label="SIMULIA">
                <path d="M10 1q9 0 2 5-3 2-5 2M7 10q7-1 5 4-2 4-9 6 3-6 5-8M21 8q-7 0-4 4 3 4-4 6" fill="none" stroke="#444c52" strokeWidth="2" />
                <g fill="none" stroke="#555c62" strokeWidth="2">
                  <path d="M36 11h-6q-3 0-2 3h5q3 0 1 4h-7M41 10l-2 9M44 19l3-8 4 5 5-5 1 8M62 10l-1 6q0 2 3 2h4q3 0 3-8M76 10l-2 8h8M87 10l-2 9M89 19q0-8 5-8 4 0 4 8M90 15h8" />
                </g>
              </svg>
            </Prompt>
          </Work>
        </Body>
        <Messages>
          <MessageBox>
            <MessageIcon>
              <svg width="22" height="22" viewBox="0 0 22 22" aria-hidden="true"><path d="M3 2h15v17H3z" fill="#b6b8a8" stroke="#555" /><path d="M1 20l7-6M3 22l7-7" stroke="#444" strokeWidth="2" /></svg>
            </MessageIcon>
            <Log>{"选中的区域上将使用二次四面体单元"}<Mono>{"  (C3D10)."}</Mono>{"\n"}<Mono>7137 </Mono>个单元已创建到部件<Mono>: Part-1</Mono></Log>
          </MessageBox>
          <RedNote>
            本视
            <ResizeButton aria-label="resize"><svg width="8" height="7" viewBox="0 0 8 7"><path d="M7 0L1 6M1 2v4h4" fill="none" stroke="#777" /></svg></ResizeButton>
          </RedNote>
        </Messages>
      </AppWindow>
      <SealMark />
      <Watermark>录制工具<br /><WatermarkName>KK 录像机</WatermarkName></Watermark>
      <Gadget />
      <Time>00:02</Time>
      <Player>
        <PlayButton aria-label="shuffle"><svg width="10" height="10" viewBox="0 0 10 10"><path d="M1 1l4 6 4-6M5 7v3" fill="none" stroke="#ddd" strokeWidth="2" /></svg></PlayButton>
        <PlayButton aria-label="repeat"><svg width="10" height="10" viewBox="0 0 10 10"><path d="M3 1a4 4 0 1 0 4 0M5 0v5" fill="none" stroke="#ddd" /></svg></PlayButton>
        <PlayButton $wide aria-label="stop"><svg width="8" height="8" viewBox="0 0 8 8"><path d="M0 0h8v8H0z" fill="#f4f4f4" /></svg></PlayButton>
        <Transport>
          <PlayButton $wide aria-label="previous"><svg width="18" height="8" viewBox="0 0 18 8"><path d="M1 0v8M9 0v8L3 4zM17 0v8l-6-4z" fill="#aebbc4" stroke="#aebbc4" /></svg></PlayButton>
          <Pause aria-label="pause"><svg width="10" height="14" viewBox="0 0 10 14"><path d="M0 0h4v14H0zM6 0h4v14H6z" fill="#fff" /></svg></Pause>
          <PlayButton $wide aria-label="next"><svg width="18" height="8" viewBox="0 0 18 8"><path d="M0 0v8l7-4zM8 0v8l7-4zM16 0h2v8h-2z" fill="#eef3f6" /></svg></PlayButton>
        </Transport>
        <PlayButton aria-label="mute"><svg width="10" height="10" viewBox="0 0 10 10"><path d="M0 3h3l3-3v10L3 7H0zM8 3v4" fill="#eee" stroke="#eee" /></svg></PlayButton>
        <Volume type="range" aria-label="volume" defaultValue={50} />
      </Player>
    </Screen>
  );
}
